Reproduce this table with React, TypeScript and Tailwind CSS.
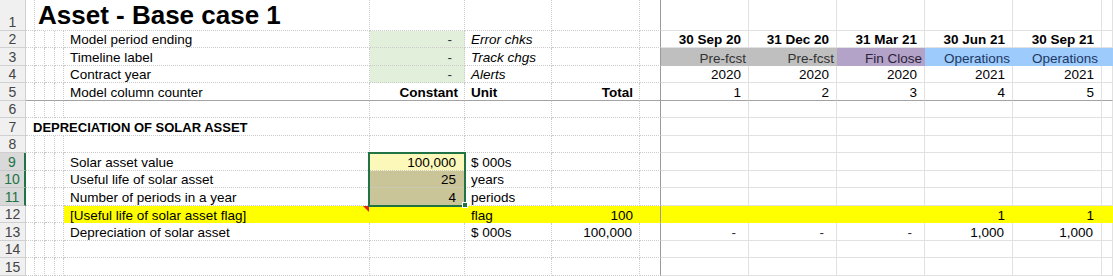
import React from "react";

const COLS =
  "grid grid-cols-[26px_9px_10px_10px_9px_306px_95px_87px_88px_21px_88px_88px_88px_88px_89px_11px]";

type K = "dot" | "solid" | "none";

const LINE: Record<K, string> = {
  dot: "border-r border-b border-dotted border-[#cbcbcb]",
  solid: "border-r border-b border-[#e1e1e1]",
  none: "",
};

const SPAN: Record<number, string> = { 1: "", 4: "col-span-4", 5: "col-span-5" };

// right aligned number / label paddings
const NUM = "justify-end pr-[7px]";
const TXT = "justify-end pr-[3px]";
const DASH = "justify-end pr-[12px]";
const LEFT = "pl-[6px]";
const UNDER = "[border-bottom-style:solid]! border-b-[#a3a3a3]!";

function Cell({
  k = "dot",
  span = 1,
  className = "",
  children,
}: {
  k?: K;
  span?: number;
  className?: string;
  children?: React.ReactNode;
}) {
  return (
    <div
      className={`${SPAN[span]} ${LINE[k]} relative flex items-end overflow-hidden whitespace-nowrap leading-[14px] ${className}`}
    >
      {children}
    </div>
  );
}

function Head({ n, sel = false }: { n: number; sel?: boolean }) {
  return (
    <div
      className={`flex items-end justify-center pb-[1px] leading-[14px] text-[14px] ${
        sel
          ? "border-r-2 border-b border-r-[#217346] border-b-[#c9c9c9] bg-[#d9d9d9] text-[#217346]"
          : "border-r border-b border-[#d0d0d0] bg-[#f0f0f0] text-[#444]"
      }`}
    >
      {n}
    </div>
  );
}

// freeze pane column: dotted bottom, solid grey right line
function Frz({ className = "" }: { className?: string }) {
  return (
    <div
      className={`border-r border-b border-[#9a9a9a] [border-bottom-style:dotted] border-b-[#cbcbcb] ${className}`}
    />
  );
}

function Narrow({ className = "" }: { className?: string }) {
  return (
    <>
      <Cell className={className} />
      <Cell className={className} />
      <Cell className={className} />
      <Cell className={className} />
    </>
  );
}

function Row({ h = "h-[17px]", children }: { h?: string; children: React.ReactNode }) {
  return <div className={`${COLS} ${h}`}>{children}</div>;
}

function EmptyRow({ n, h }: { n: number; h: string }) {
  return (
    <Row h={h}>
      <Head n={n} />
      <Narrow />
      <Cell />
      <Cell />
      <Cell />
      <Cell />
      <Frz />
      <Cell k="solid" />
      <Cell k="solid" />
      <Cell k="solid" />
      <Cell k="solid" />
      <Cell k="solid" />
      <Cell k="solid" />
    </Row>
  );
}

export default function App() {
  return (
    <div className="relative h-[276px] w-[1113px] overflow-hidden bg-white font-['Liberation_Sans',Arial,sans-serif] text-[13.5px] text-black">
      {/* Row 1 - title */}
      <Row h="h-[31px]">
        <Head n={1} />
        <Cell />
        <Cell span={4} className="pl-[3px] text-[26px] font-bold leading-[29px]">
          Asset - Base case 1
        </Cell>
        <Cell />
        <Cell />
        <Cell />
        <Frz />
        <Cell k="solid" />
        <Cell k="solid" />
        <Cell k="solid" />
        <Cell k="solid" />
        <Cell k="solid" />
        <Cell k="solid" />
      </Row>

      {/* Row 2 */}
      <Row h="h-[17px]">
        <Head n={2} />
        <Narrow />
        <Cell className={LEFT}>Model period ending</Cell>
        <Cell className={`${DASH} bg-[#e2efda] text-[#333]`}>-</Cell>
        <Cell className={`${LEFT} italic`}>Error chks</Cell>
        <Cell />
        <Frz />
        <Cell k="solid" className={`${NUM} font-bold`}>30 Sep 20</Cell>
        <Cell k="solid" className={`${NUM} font-bold`}>31 Dec 20</Cell>
        <Cell k="solid" className={`${NUM} font-bold`}>31 Mar 21</Cell>
        <Cell k="solid" className={`${NUM} font-bold`}>30 Jun 21</Cell>
        <Cell k="solid" className={`${NUM} font-bold`}>30 Sep 21</Cell>
        <Cell k="solid" />
      </Row>

      {/* Row 3 */}
      <Row h="h-[18px]">
        <Head n={3} />
        <Narrow />
        <Cell className={LEFT}>Timeline label</Cell>
        <Cell className={`${DASH} bg-[#e2efda] text-[#333]`}>-</Cell>
        <Cell className={`${LEFT} italic`}>Track chgs</Cell>
        <Cell />
        <Frz />
        <Cell k="none" className={`${TXT} bg-[#bfbfbf] text-[#333]`}>Pre-fcst</Cell>
        <Cell k="none" className={`${TXT} bg-[#bfbfbf] text-[#333]`}>Pre-fcst</Cell>
        <Cell k="none" className={`${TXT} bg-[#b4a3c9] text-[#2a2238]`}>Fin Close</Cell>
        <Cell k="none" className={`${TXT} bg-[#9ccbfc] text-[#1f3864]`}>Operations</Cell>
        <Cell k="none" className={`${TXT} pr-[4px] bg-[#9ccbfc] text-[#1f3864]`}>Operations</Cell>
        <Cell k="none" className="bg-[#9ccbfc]" />
      </Row>

      {/* Row 4 */}
      <Row h="h-[17px]">
        <Head n={4} />
        <Narrow />
        <Cell className={LEFT}>Contract year</Cell>
        <Cell className={`${DASH} bg-[#e2efda] text-[#333]`}>-</Cell>
        <Cell className={`${LEFT} italic`}>Alerts</Cell>
        <Cell />
        <Frz />
        <Cell k="solid" className={NUM}>2020</Cell>
        <Cell k="solid" className={NUM}>2020</Cell>
        <Cell k="solid" className={NUM}>2020</Cell>
        <Cell k="solid" className={NUM}>2021</Cell>
        <Cell k="solid" className={NUM}>2021</Cell>
        <Cell k="solid" />
      </Row>

      {/* Row 5 - column headings */}
      <Row h="h-[18px]">
        <Head n={5} />
        <Narrow className={UNDER} />
        <Cell className={`${LEFT} ${UNDER}`}>Model column counter</Cell>
        <Cell className={`justify-end pr-[6px] font-bold ${UNDER}`}>Constant</Cell>
        <Cell className={`${LEFT} font-bold ${UNDER}`}>Unit</Cell>
        <Cell className={`justify-end pr-[6px] font-bold ${UNDER}`}>Total</Cell>
        <Frz className={UNDER} />
        <Cell k="solid" className={`${NUM} ${UNDER}`}>1</Cell>
        <Cell k="solid" className={`${NUM} ${UNDER}`}>2</Cell>
        <Cell k="solid" className={`${NUM} ${UNDER}`}>3</Cell>
        <Cell k="solid" className={`${NUM} ${UNDER}`}>4</Cell>
        <Cell k="solid" className={`${NUM} ${UNDER}`}>5</Cell>
        <Cell k="solid" className={UNDER} />
      </Row>

      <EmptyRow n={6} h="h-[17px]" />

      {/* Row 7 - section heading */}
      <Row h="h-[18px]">
        <Head n={7} />
        <Cell span={5} className="pl-[7px] text-[13px] font-bold">
          DEPRECIATION OF SOLAR ASSET
        </Cell>
        <Cell />
        <Cell />
        <Cell />
        <Frz />
        <Cell k="solid" />
        <Cell k="solid" />
        <Cell k="solid" />
        <Cell k="solid" />
        <Cell k="solid" />
        <Cell k="solid" />
      </Row>

      <EmptyRow n={8} h="h-[17px]" />

      {/* Row 9 */}
      <Row h="h-[18px]">
        <Head n={9} sel />
        <Narrow />
        <Cell className={LEFT}>Solar asset value</Cell>
        <Cell className={`${NUM} pr-[8px] bg-[#fcf8b9]`}>100,000</Cell>
        <Cell className={LEFT}>$ 000s</Cell>
        <Cell />
        <Frz />
        <Cell k="solid" />
        <Cell k="solid" />
        <Cell k="solid" />
        <Cell k="solid" />
        <Cell k="solid" />
        <Cell k="solid" />
      </Row>

      {/* Row 10 */}
      <Row h="h-[17px]">
        <Head n={10} sel />
        <Narrow />
        <Cell className={LEFT}>Useful life of solar asset</Cell>
        <Cell className={`${NUM} pr-[8px] bg-[#c9c598]`}>25</Cell>
        <Cell className={LEFT}>years</Cell>
        <Cell />
        <Frz />
        <Cell k="solid" />
        <Cell k="solid" />
        <Cell k="solid" />
        <Cell k="solid" />
        <Cell k="solid" />
        <Cell k="solid" />
      </Row>

      {/* Row 11 */}
      <Row h="h-[18px]">
        <Head n={11} sel />
        <Narrow />
        <Cell className={LEFT}>Number of periods in a year</Cell>
        <Cell className={`${NUM} pr-[8px] bg-[#c9c598]`}>4</Cell>
        <Cell className={LEFT}>periods</Cell>
        <Cell />
        <Frz />
        <Cell k="solid" />
        <Cell k="solid" />
        <Cell k="solid" />
        <Cell k="solid" />
        <Cell k="solid" />
        <Cell k="solid" />
      </Row>

      {/* Row 12 - flag row */}
      <Row h="h-[17px]">
        <Head n={12} />
        <Narrow />
        <Cell k="none" className={`${LEFT} bg-[#ffff00]`}>
          [Useful life of solar asset flag]
          {/* comment indicator */}
          <span className="absolute top-0 right-[1px] h-0 w-0 border-t-[6px] border-l-[6px] border-t-[#e4231b] border-l-transparent" />
        </Cell>
        <Cell k="none" className="bg-[#ffff00]" />
        <Cell k="none" className={`${LEFT} bg-[#ffff00]`}>flag</Cell>
        <Cell k="none" className={`${NUM} bg-[#ffff00]`}>100</Cell>
        <Frz className="bg-[#ffff00] border-b-transparent" />
        <Cell k="none" className="bg-[#ffff00]" />
        <Cell k="none" className="bg-[#ffff00]" />
        <Cell k="none" className="bg-[#ffff00]" />
        <Cell k="none" className={`${NUM} pr-[8px] bg-[#ffff00]`}>1</Cell>
        <Cell k="none" className={`${NUM} pr-[8px] bg-[#ffff00]`}>1</Cell>
        <Cell k="none" className="bg-[#ffff00]" />
      </Row>

      {/* Row 13 */}
      <Row h="h-[18px]">
        <Head n={13} />
        <Narrow />
        <Cell className={LEFT}>Depreciation of solar asset</Cell>
        <Cell />
        <Cell className={LEFT}>$ 000s</Cell>
        <Cell className={NUM}>100,000</Cell>
        <Frz />
        <Cell k="solid" className={`${DASH} text-[#333]`}>-</Cell>
        <Cell k="solid" className={`${DASH} text-[#333]`}>-</Cell>
        <Cell k="solid" className={`${DASH} text-[#333]`}>-</Cell>
        <Cell k="solid" className={`${NUM} pr-[8px]`}>1,000</Cell>
        <Cell k="solid" className={`${NUM} pr-[8px]`}>1,000</Cell>
        <Cell k="solid" />
      </Row>

      <EmptyRow n={14} h="h-[17px]" />
      <EmptyRow n={15} h="h-[18px]" />

      {/* selected range G9:G11 */}
      <div className="pointer-events-none absolute top-[152px] left-[368px] h-[55px] w-[98px] border-2 border-[#217346]" />
      <div className="pointer-events-none absolute top-[202px] left-[462px] h-[6px] w-[6px] border border-white bg-[#217346]" />
    </div>
  );
}
